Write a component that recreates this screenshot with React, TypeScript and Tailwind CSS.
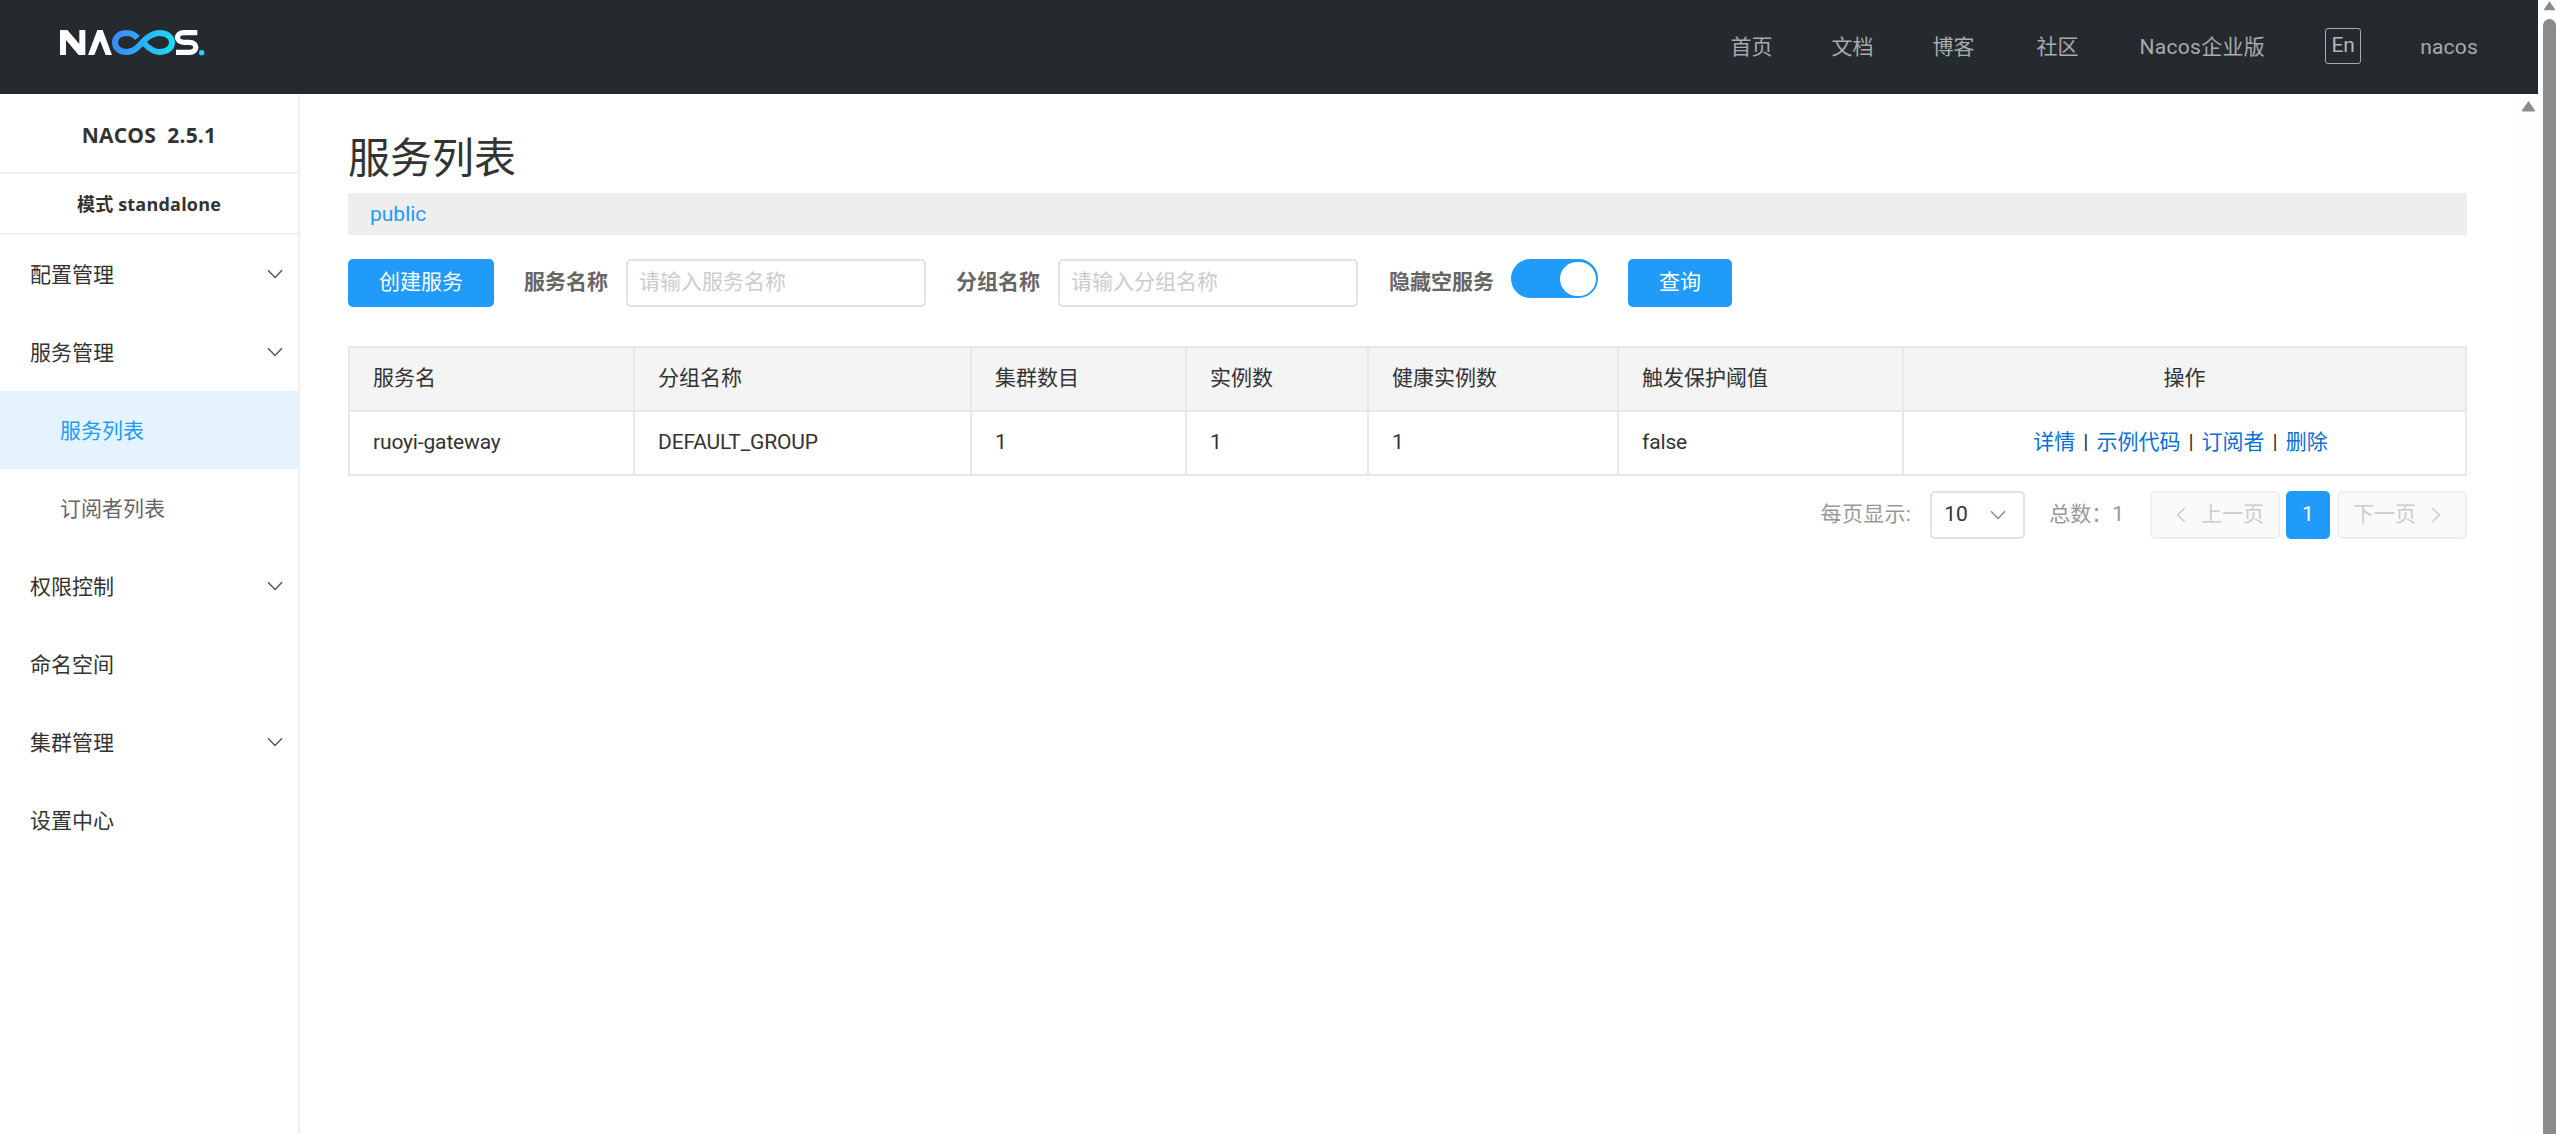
import React from "react";

const Chevron = ({ className = "" }: { className?: string }) => (
  <svg width="16" height="10" viewBox="0 0 16 10" fill="none" className={className}>
    <path d="M1 1.2 L8 8.4 L15 1.2" stroke="currentColor" strokeWidth="1.4" />
  </svg>
);

const Logo = () => (
  <svg width="180" height="70" viewBox="0 0 540 210" fill="none" aria-label="NACOS">
    <defs>
      <linearGradient id="lg" x1="216" y1="0" x2="405" y2="0" gradientUnits="userSpaceOnUse">
        <stop offset="0" stopColor="#3a87ff" />
        <stop offset="1" stopColor="#1cdcf5" />
      </linearGradient>
    </defs>
    <polygon points="60,60 82,60 118,102 118,60 136,60 136,135 116,135 78,90 78,135 60,135" fill="#fff" />
    <polygon points="172,60 188,60 216,135 197,135 180,92 163,135 144,135" fill="#fff" />
    <path
      d="M292 84 C282 72 272 69 260 69 C240 69 225 80 225 97.5 C225 115 240 126 260 126 C282 126 296 110 312 92 C326 78 340 69 358 69 C380 69 396 80 396 97.5 C396 115 380 126 358 126 C340 126 328 116 314 102"
      stroke="url(#lg)"
      strokeWidth="18"
    />
    <path d="M472 68 H432 C406 68 406 97 432 97 H448 C474 97 474 127 448 127 H408" stroke="#fff" strokeWidth="16" />
    <circle cx="485" cy="128" r="8" fill="#1cdcf5" />
  </svg>
);

const navItems = [
  { label: "首页", cls: "ml-[0px]" },
  { label: "文档", cls: "ml-[59px]" },
  { label: "博客", cls: "ml-[59px]" },
  { label: "社区", cls: "ml-[62px]" },
  { label: "Nacos企业版", cls: "ml-[61px] tracking-[0.3px]" },
];

const Header = () => (
  <header className="h-[94px] w-[2538px] bg-[#252a2f] flex items-center shrink-0 pl-[40px]">
    <div className="-mt-[4px]">
      <Logo />
    </div>
    <nav className="ml-auto flex items-center pr-[60px] text-[21px] text-[#a8aaac] leading-[30px]">
      {navItems.map((n) => (
        <span key={n.label} className={n.cls}>
          {n.label}
        </span>
      ))}
      <span className="ml-[60px] w-[36px] h-[36px] -mt-[2px] border border-[#a8aaac] rounded-[3px] flex items-center justify-center text-[21px] text-[#b5b7b9] pb-[3px]">
        En
      </span>
      <span className="ml-[59px] tracking-[0.2px]">nacos</span>
    </nav>
  </header>
);

const menu: { label: string; chevron?: boolean; sub?: boolean; active?: boolean }[] = [
  { label: "配置管理", chevron: true },
  { label: "服务管理", chevron: true },
  { label: "服务列表", sub: true, active: true },
  { label: "订阅者列表", sub: true },
  { label: "权限控制", chevron: true },
  { label: "命名空间" },
  { label: "集群管理", chevron: true },
  { label: "设置中心" },
];

const Sidebar = () => (
  <aside className="w-[300px] shrink-0 border-r-2 border-[#f0f0f0]">
    <div className="h-[80px] border-b-2 border-[#f0f0f0] flex items-center justify-center text-[21px] font-bold text-[#333] tracking-[0.2px] font-['Open_Sans','Noto_Sans_CJK_SC',sans-serif] pt-[5px]">
      NACOS&nbsp;&nbsp;2.5.1
    </div>
    <div className="h-[61px] border-b-2 border-[#f0f0f0] flex items-center justify-center text-[18px] font-bold text-[#333] tracking-[0.2px] font-['Open_Sans','Noto_Sans_CJK_SC',sans-serif] pt-[2px]">
      模式&nbsp;standalone
    </div>
    <div>
      {menu.map((m) => (
        <div
          key={m.label}
          className={
            m.active
              ? "h-[78px] flex items-center pl-[60px] pt-[3px] bg-[#e4f3fe] text-[#209bfa] text-[21px]"
              : m.sub
                ? "h-[78px] flex items-center pl-[60px] pt-[3px] text-[#666] text-[21px]"
                : "h-[78px] flex items-center pl-[30px] pt-[3px] text-[#333] text-[21px]"
          }
        >
          {m.label}
          {m.chevron && <Chevron className="ml-auto mr-[15px] -mt-[3px] text-[#555]" />}
        </div>
      ))}
    </div>
  </aside>
);

const Field = ({ label, placeholder, cls }: { label: string; placeholder: string; cls: string }) => (
  <div className={`flex items-center ${cls}`}>
    <span className="text-[21px] font-bold text-[#666] mr-[18px] whitespace-nowrap">{label}</span>
    <div className="w-[300px] h-[48px] border-2 border-[#e2e2e2] rounded-[5px] flex items-center pl-[11px] text-[21px] text-[#cccccc]">
      {placeholder}
    </div>
  </div>
);

const Toolbar = () => (
  <div className="flex items-start mt-[24px] h-[48px]">
    <button className="w-[146px] h-[48px] rounded-[5px] bg-[#209bfa] text-white text-[21px]">创建服务</button>
    <Field label="服务名称" placeholder="请输入服务名称" cls="ml-[30px]" />
    <Field label="分组名称" placeholder="请输入分组名称" cls="ml-[30px]" />
    <span className="ml-[31px] h-[48px] flex items-center text-[21px] font-bold text-[#666] whitespace-nowrap">隐藏空服务</span>
    <div className="ml-[17px] w-[87px] h-[39px] rounded-full bg-[#209bfa] flex items-center justify-end pr-[2px]">
      <div className="w-[36px] h-[34px] rounded-full bg-white" />
    </div>
    <button className="ml-[30px] w-[104px] h-[48px] rounded-[5px] bg-[#209bfa] text-white text-[21px]">查询</button>
  </div>
);

const headers = ["服务名", "分组名称", "集群数目", "实例数", "健康实例数", "触发保护阈值"];
const cells = ["ruoyi-gateway", "DEFAULT_GROUP", "1", "1", "1", "false"];
const widths = ["w-[285px]", "w-[337px]", "w-[215px]", "w-[182px]", "w-[250px]", "w-[285px]", "w-[563px]"];
const thCls = "border-2 border-[#e8e8e8] h-[64px] px-[23px] font-normal text-[21px] text-[#333] bg-[#f4f4f4]";
const tdCls = "border-2 border-[#e8e8e8] h-[64px] px-[23px] text-[21px] text-[#333]";

const Sep = () => <span className="mx-[8px]">|</span>;

const Table = () => (
  <table className="mt-[39px] w-[2117px] table-fixed border-collapse">
    <colgroup>
      {widths.map((w, i) => (
        <col key={i} className={w} />
      ))}
    </colgroup>
    <thead>
      <tr>
        {headers.map((h) => (
          <th key={h} className={`${thCls} text-left`}>
            {h}
          </th>
        ))}
        <th className={`${thCls} text-center`}>操作</th>
      </tr>
    </thead>
    <tbody>
      <tr>
        {cells.map((c, i) => (
          <td key={i} className={`${tdCls} text-left tracking-[-0.15px]`}>
            {c}
          </td>
        ))}
        <td className={`${tdCls} text-center`}>
          <span className="pr-[8px]">
            <a className="text-[#0a6fd6]">详情</a>
            <Sep />
            <a className="text-[#0a6fd6]">示例代码</a>
            <Sep />
            <a className="text-[#0a6fd6]">订阅者</a>
            <Sep />
            <a className="text-[#0a6fd6]">删除</a>
          </span>
        </td>
      </tr>
    </tbody>
  </table>
);

const Pager = () => (
  <div className="mt-[15px] h-[48px] flex items-center justify-end text-[21px] text-[#999]">
    <span className="tracking-[0.3px]">每页显示:</span>
    <div className="ml-[19px] w-[95px] h-[48px] border-2 border-[#e2e2e2] rounded-[5px] flex items-center pl-[12px] text-[#333]">
      10
      <Chevron className="ml-auto mr-[17px] text-[#888]" />
    </div>
    <span className="ml-[24px]">{"总数\uFF1A1"}</span>
    <div className="ml-[26px] w-[130px] h-[48px] border-2 border-[#eeeeee] rounded-[5px] bg-[#fafafa] flex items-center pl-[21px] text-[#cccccc] gap-[12px]">
      <Chevron className="rotate-90" />
      上一页
    </div>
    <div className="ml-[6px] w-[44px] h-[48px] rounded-[5px] bg-[#209bfa] text-white flex items-center justify-center">1</div>
    <div className="ml-[7px] w-[130px] h-[48px] border-2 border-[#eeeeee] rounded-[5px] bg-[#fafafa] flex items-center pl-[14px] text-[#cccccc] gap-[12px]">
      下一页
      <Chevron className="-rotate-90" />
    </div>
  </div>
);

const Arrow = ({ cls }: { cls: string }) => (
  <svg width="15" height="12" viewBox="0 0 15 12" className={cls}>
    <path d="M7.5 1 L14 10.5 Q14.5 11.5 13 11.5 H2 Q0.5 11.5 1 10.5 Z" fill="#8b8b8b" />
  </svg>
);

export default function App() {
  return (
    <div className="h-screen w-full flex overflow-hidden bg-white font-['Roboto','Noto_Sans_CJK_SC',sans-serif]">
      <div className="w-[2543px] flex flex-col">
        <Header />
        <div className="flex flex-1 min-h-0">
          <Sidebar />
          <main className="flex-1 pl-[48px] pr-[50px]">
            <h1 className="mt-[40px] h-[50px] text-[42px] leading-[50px] text-[#333] font-normal">服务列表</h1>
            <div className="mt-[9px] h-[42px] bg-[#eeeeee] flex items-center pl-[22px] pt-[1px] text-[21px] text-[#209bfa]">public</div>
            <Toolbar />
            <Table />
            <Pager />
          </main>
          <div className="w-[28px] shrink-0 bg-[#fdfdfd] pt-[6px] pl-[4px]">
            <Arrow cls="block" />
          </div>
        </div>
      </div>
      <div className="w-[13px] shrink-0 flex flex-col">
        <Arrow cls="block w-[13px] h-[11px] shrink-0" />
        <div className="mt-[8px] flex-1 bg-[#8b8b8b] rounded-t-full" />
      </div>
    </div>
  );
}
